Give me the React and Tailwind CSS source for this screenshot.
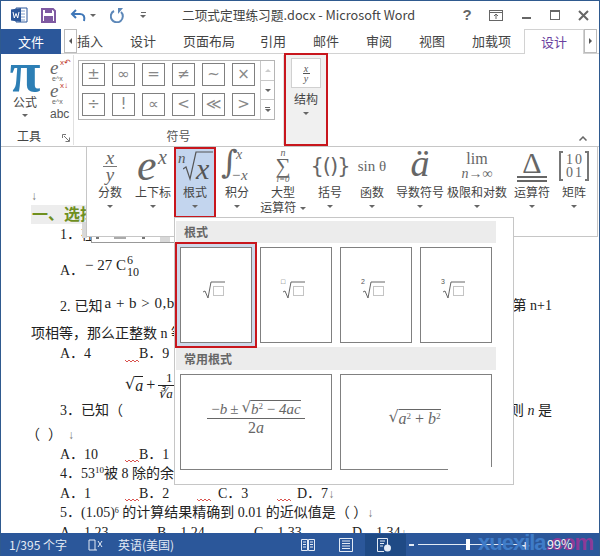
import React from 'react';

const uiFont = "font-['Noto_Sans_CJK_SC','Noto_Sans',sans-serif]";
const docFont = "font-['Liberation_Serif','Noto_Sans_CJK_SC',serif]";

const Caret = ({ className = '' }) => (
  <span className={`inline-block w-0 h-0 border-x-[3px] border-x-transparent border-t-[3px] border-t-[#666] ${className}`}></span>
);

const Squiggle = () => (
  <svg width="14" height="4" viewBox="0 0 14 4" className="self-end mb-[1px] shrink-0">
    <path d="M0 1 L2 3 L4 1 L6 3 L8 1 L10 3 L12 1 L14 3" fill="none" stroke="#d9534f" strokeWidth="1" />
  </svg>
);

const Radical = ({ children, className = '' }) => (
  <span className={`inline-flex items-start ${className}`}>
    <span className="font-['DejaVu_Sans',sans-serif] font-light leading-none">√</span>
    <span className="border-t border-current leading-[1.05] pt-[1px]">{children}</span>
  </span>
);

const RootIcon = ({ index }) => (
  <div className="relative pb-[10px] pr-[4px]">
    {index && (
      <span className="absolute left-[-1px] top-[-3px] text-[7px] leading-none text-[#555] font-['Liberation_Sans',sans-serif]">{index}</span>
    )}
    <svg width="24" height="18" viewBox="0 0 24 18">
      <path d="M1 11 L3 10 L6 17 L9 1 L23 1" fill="none" stroke="#666" strokeWidth="1" />
      <rect x="11.5" y="5.5" width="10" height="9" fill="none" stroke="#888" strokeWidth="1" strokeDasharray="1 1" />
    </svg>
  </div>
);

const EquationTool = ({ arrow, className = '' }) => (
  <div className={`relative h-[22px] w-[20px] leading-none text-[#666] ${className}`}>
    <span className="block font-['Liberation_Serif',serif] italic text-[19px] leading-[15px]">e</span>
    <span className="absolute left-[10px] top-[-1px] text-[8px] text-[#c0392b]">{arrow}</span>
    <div className="text-[7px] leading-[7px] ml-[2px]">e^x</div>
  </div>
);

const symbols = ['±', '∞', '=', '≠', '~', '×', '÷', '!', '∝', '<', '≪', '>'];
const tabs = [
  ['插入', 'w-[53px]'],
  ['设计', 'w-[53px]'],
  ['页面布局', 'w-[77px]'],
  ['引用', 'w-[53px]'],
  ['邮件', 'w-[53px]'],
  ['审阅', 'w-[53px]'],
  ['视图', 'w-[53px]'],
  ['加载项', 'w-[54px]'],
];

const structures = [
  {
    label: '分数', w: 'w-[44px]',
    icon: (
      <div className="flex flex-col items-center italic text-[19px] leading-[16px]">
        <span>x</span>
        <span className="w-[14px] border-t border-[#777]"></span>
        <span>y</span>
      </div>
    ),
  },
  {
    label: '上下标', w: 'w-[42px]',
    icon: (
      <div className="relative w-[32px] h-[36px] italic">
        <span className="absolute left-0 top-[-4px] text-[44px] leading-none">e</span>
        <span className="absolute left-[21px] top-[-1px] text-[20px] leading-none">x</span>
      </div>
    ),
  },
  {
    label: '根式', w: 'w-[42px]', active: true,
    icon: (
      <div className="relative w-[38px] h-[36px] italic text-[#555]">
        <span className="absolute left-[2px] top-[3px] text-[15px] leading-none">n</span>
        <svg width="30" height="30" viewBox="0 0 30 30" className="absolute left-[7px] top-[3px]">
          <path d="M0 18 L3 16 L7 28 L13 1 L30 1" fill="none" stroke="#555" strokeWidth="1.2" />
        </svg>
        <span className="absolute left-[20px] top-[6px] text-[30px] leading-none">x</span>
      </div>
    ),
  },
  {
    label: '积分', w: 'w-[42px]',
    icon: (
      <div className="relative w-[32px] h-[36px] text-[#666]">
        <span className="absolute left-0 top-[-2px] text-[32px] leading-none font-['DejaVu_Serif',serif]">∫</span>
        <span className="absolute left-[15px] top-[0px] italic text-[14px] leading-none">x</span>
        <span className="absolute left-[10px] top-[20px] italic text-[15px] leading-none">−x</span>
      </div>
    ),
  },
  {
    label: ['大型', '运算符'], w: 'w-[50px]',
    icon: <div className="flex flex-col items-center leading-none"><span className="italic text-[10px]">n</span><span className="text-[21px] leading-[17px]">∑</span><span className="italic text-[9px]">i=0</span></div>,
  },
  { label: '括号', w: 'w-[44px]', icon: <div className="text-[21px] font-['DejaVu_Sans',sans-serif] tracking-[-1px] leading-none">{'{()}'}</div> },
  { label: '函数', w: 'w-[40px]', icon: <div className="text-[15px] whitespace-nowrap">sin θ</div> },
  { label: '导数符号', w: 'w-[56px]', icon: <div className="italic text-[38px] leading-none mt-[-6px]">ä</div> },
  {
    label: '极限和对数', w: 'w-[58px]',
    icon: <div className="flex flex-col items-center leading-none"><span className="text-[16px]">lim</span><span className="italic text-[14px] whitespace-nowrap">n→∞</span></div>,
  },
  {
    label: '运算符', w: 'w-[52px]',
    icon: (
      <div className="flex flex-col items-center w-[30px]">
        <span className="text-[30px] leading-[26px]">Δ</span>
        <span className="w-full h-[2px] bg-[#666]"></span>
        <span className="w-full h-[2px] bg-[#666] mt-[2px]"></span>
      </div>
    ),
  },
  {
    label: '矩阵', w: 'w-[32px]',
    icon: (
      <div className="flex h-[30px] w-[30px] items-stretch">
        <span className="w-[4px] border-y-2 border-l-2 border-[#777]"></span>
        <span className="flex-1 text-[14px] leading-[13px] pt-[2px] text-center tracking-[2px] pl-[2px]">10<br />01</span>
        <span className="w-[4px] border-y-2 border-r-2 border-[#777]"></span>
      </div>
    ),
  },
];

const StructureItem = ({ item }) => (
  <div className={`relative ${item.w} h-full flex flex-col items-center shrink-0 ${item.active ? 'bg-[#c3d5ee]' : ''}`}>
    {item.active && <div className="absolute inset-0 border-2 border-[#c8161d]"></div>}
    <div className={`h-[36px] mt-[1px] flex items-center justify-center text-[#666] font-['Liberation_Serif',serif] ${item.w}`}>{item.icon}</div>
    {Array.isArray(item.label) ? (
      <div className="flex flex-col items-center text-[12px] leading-[15px] text-[#444]">
        <span>{item.label[0]}</span>
        <span className="whitespace-nowrap">{item.label[1]} <Caret className="align-middle ml-[1px]" /></span>
      </div>
    ) : (
      <>
        <div className="text-[12px] leading-[15px] text-[#444] whitespace-nowrap">{item.label}</div>
        <Caret className="mt-[6px]" />
      </>
    )}
  </div>
);

const TitleBar = () => (
  <div className="h-[28px] flex items-center shrink-0 relative bg-white">
    <svg width="17" height="16" viewBox="0 0 17 16" className="ml-[10px]">
      <path d="M5 1 H16 V15 H5 Z" fill="#fff" stroke="#2b579a" />
      <path d="M7 4 H14 M7 7 H14 M7 10 H14 M7 13 H14" stroke="#7d9ccb" />
      <path d="M0 2.5 L10 1 V15 L0 13.5 Z" fill="#2b579a" />
      <path d="M2 5 L3.3 11 L5 6.5 L6.7 11 L8 5" fill="none" stroke="#fff" strokeWidth="1" />
    </svg>
    <svg width="15" height="15" viewBox="0 0 15 15" className="ml-[13px]">
      <path d="M1 1 H12 L14 3 V14 H1 Z" fill="none" stroke="#7f5aa2" strokeWidth="2" />
      <rect x="4" y="1" width="7" height="4" fill="#7f5aa2" />
      <rect x="3" y="8" width="9" height="6" fill="#7f5aa2" />
    </svg>
    <svg width="16" height="13" viewBox="0 0 16 13" className="ml-[14px]">
      <path d="M6 1 L2 5 L6 9" fill="none" stroke="#3f77b8" strokeWidth="2" />
      <path d="M2 5 H10 C14 5 15 8 14 12" fill="none" stroke="#3f77b8" strokeWidth="2" />
    </svg>
    <Caret className="ml-[4px]" />
    <svg width="14" height="15" viewBox="0 0 14 15" className="ml-[14px]">
      <path d="M4 3 A6 6 0 1 0 11 4" fill="none" stroke="#5c87b8" strokeWidth="2" />
      <path d="M8 0 V6 L13 0 Z" fill="#5c87b8" />
    </svg>
    <div className="ml-[16px] flex flex-col items-center gap-[2px]">
      <span className="w-[5px] border-t border-[#666]"></span>
      <Caret />
    </div>
    <div className="absolute left-[181px] text-[12.7px] text-[#444] whitespace-nowrap">二项式定理练习题.docx - Microsoft Word</div>
    <div className="absolute right-[10px] top-0 h-full flex items-center text-[#666]">
      <span className="w-[14px] text-center font-bold text-[15px] font-['Liberation_Sans',sans-serif]">?</span>
      <svg width="14" height="11" viewBox="0 0 14 11" className="ml-[15px]">
        <rect x="0.5" y="0.5" width="13" height="10" fill="none" stroke="#666" />
        <path d="M0 2.5 H14 M7 9 V4 M5 6 L7 4 L9 6" fill="none" stroke="#666" />
      </svg>
      <span className="ml-[19px] w-[9px] h-[2px] bg-[#666] mt-[6px]"></span>
      <span className="ml-[19px] w-[10px] h-[10px] border border-[#666] border-t-2"></span>
      <svg width="11" height="11" viewBox="0 0 11 11" className="ml-[18px]">
        <path d="M1 1 L10 10 M10 1 L1 10" stroke="#666" strokeWidth="2" />
      </svg>
    </div>
  </div>
);

const TabBar = () => (
  <div className="h-[25px] flex items-stretch shrink-0 border-b border-[#d2d2d2] text-[13px] text-[#444]">
    <div className="w-[60px] -mb-[1px] bg-[#2b579a] text-white flex items-center justify-center">文件</div>
    <div className="ml-[3px] w-[13px] border border-[#bbb] flex items-center justify-center">
      <span className="w-0 h-0 border-y-[3px] border-y-transparent border-r-[3px] border-r-[#555]"></span>
    </div>
    <div className="flex items-center -ml-[2px]">
      {tabs.map(([name, w]) => (
        <div key={name + w} className={`${w} whitespace-nowrap pl-[2px]`}>{name}</div>
      ))}
    </div>
    <div className="w-[60px] -mb-[1px] bg-white border-x border-t border-[#d2d2d2] text-[#6b3fa0] flex items-center justify-center">设计</div>
    <div className="w-[13px] border border-[#bbb] flex items-center justify-center">
      <span className="w-0 h-0 border-y-[3px] border-y-transparent border-l-[3px] border-l-[#555]"></span>
    </div>
  </div>
);

const Ribbon = () => (
  <div className="h-[93px] flex shrink-0 border-b border-[#c6c6c6] relative bg-white text-[#444]">
    {/* 工具 */}
    <div className="w-[73px] border-r border-[#e1e1e1] my-[1px] flex flex-col relative">
      <div className="flex h-[71px]">
        <div className="w-[46px] flex flex-col items-center">
          <span className="font-['Liberation_Serif',serif] font-bold text-[56px] leading-[33px] mt-[1px] text-[#2d7fb5] ml-[2px]">π</span>
          <span className="text-[12px] leading-[15px] mt-[5px] ml-[2px] relative">公式</span>
          <Caret className="mt-[5px] ml-[2px]" />
        </div>
        <div className="flex flex-col w-[22px] mt-[5px] ml-[3px] font-['Liberation_Sans',sans-serif]">
          <EquationTool arrow="x↶" />
          <EquationTool arrow="x↓" className="mt-[1px]" />
          <span className="text-[12px] mt-[3px] leading-none text-[#555]">abc</span>
        </div>
      </div>
      <div className="mt-[2px] pl-[16px] text-[12px] leading-[16px]">工具</div>
      <svg width="8" height="8" viewBox="0 0 8 8" className="absolute right-[3px] bottom-[3px]">
        <path d="M0.5 4 V0.5 H4 M2 2 L7 7 M3.5 7.5 H7.5 V3.5" fill="none" stroke="#777" />
      </svg>
    </div>
    {/* 符号 */}
    <div className="w-[210px] flex flex-col items-center my-[1px] border-r border-[#e1e1e1]">
      <div className="mt-[5px] ml-[-4px] w-[197px] h-[60px] border border-[#b5b5b5] flex shrink-0">
        <div className="flex-1 grid grid-cols-[repeat(6,23px)] grid-rows-[repeat(2,23px)] gap-x-[7px] gap-y-[7px] pl-[3px] pt-[2px]">
          {symbols.map((s) => (
            <div key={s} className="border border-[#808080] flex items-center justify-center text-[15px] leading-none text-[#888] font-['DejaVu_Sans',sans-serif]">{s}</div>
          ))}
        </div>
        <div className="w-[14px] border-l border-[#c8c8c8] flex flex-col text-[#888]">
          <div className="flex-1 flex items-center justify-center"><span className="w-0 h-0 border-x-[3px] border-x-transparent border-b-[3px] border-b-[#ccc]"></span></div>
          <div className="flex-1 flex items-center justify-center border-y border-[#c8c8c8]"><Caret /></div>
          <div className="flex-1 flex flex-col items-center justify-center gap-[1px]"><span className="w-[5px] border-t border-[#666]"></span><Caret /></div>
        </div>
      </div>
      <div className="mt-[8px] text-[12px] leading-[16px] text-[#555]">符号</div>
    </div>
    {/* 结构 */}
    <div className="w-[44px] h-[93px] -mt-[1px] bg-[#f0f0f0] border-[2px] border-[#c8161d] flex flex-col items-center shrink-0">
      <div className="mt-[3px] w-[30px] h-[30px] bg-white border border-[#d0d0d0] flex flex-col items-center justify-center font-['Liberation_Serif',serif] italic text-[10px] leading-[9px] text-[#555]">
        <span>x</span>
        <span className="w-[7px] border-t border-[#555]"></span>
        <span>y</span>
      </div>
      <span className="mt-[3px] text-[12px] leading-[16px]">结构</span>
      <Caret className="mt-[5px]" />
    </div>
    <svg width="8" height="5" viewBox="0 0 8 5" className="absolute right-[12px] bottom-[5px]">
      <path d="M0.5 4.5 L4 1 L7.5 4.5" fill="none" stroke="#666" strokeWidth="1.5" />
    </svg>
  </div>
);

const Document = () => (
  <div className={`flex-1 min-h-0 overflow-hidden pt-[40px] text-[14px] leading-[20px] text-[#222] ${docFont}`}>
    <div className="h-[18px] pl-[30px] flex items-center text-[#777] text-[12px]">↓</div>
    <div className="h-[19px] ml-[30px] w-[120px] pl-[1px] bg-[#ededed] text-[#6f8f1f] text-[16px] font-bold flex items-center whitespace-nowrap">一、选择题</div>
    <div className="h-[22px] pl-[59px] flex items-center whitespace-nowrap">1．在</div>
    <div className="h-[48px] pl-[59px] flex items-center whitespace-nowrap">
      <span className="w-[25px] mt-[2px]">A．</span>
      <span className="text-[15px] mt-[-10px]">− 27 C</span>
      <span className="flex flex-col text-[12px] leading-[12px] ml-[1px] mt-[-8px]"><span>6</span><span>10</span></span>
    </div>
    <div className="h-[20px] mt-[2px] pl-[59px] pr-[47px] flex items-center justify-between whitespace-nowrap">
      <span>2.<span className="ml-[4px]">已知</span><span className="text-[15px] tracking-[0.5px] relative top-[-3px] ml-[2px]">a + b &gt; 0,b</span></span>
      <span>第 n+1</span>
    </div>
    <div className="h-[20px] mt-[8px] pl-[30px] flex items-center whitespace-nowrap">项相等，那么正整数 n 等</div>
    <div className="h-[20px] pl-[59px] flex items-center whitespace-nowrap">
      <span className="w-[65px]">A．4</span>
      <Squiggle />
      <span>B．9</span>
    </div>
    <div className="h-[32px] mt-[5px] pl-[124px] flex items-center whitespace-nowrap text-[16px]">
      <Radical className="italic">a</Radical>
      <span className="mx-[3px]">+</span>
      <span className="flex flex-col items-center leading-[15px] text-[13px]">
        <span>1</span>
        <span className="border-t border-[#222] w-[22px] italic">∛a</span>
      </span>
    </div>
    <div className="h-[20px] pl-[59px] pr-[47px] flex items-center justify-between whitespace-nowrap">
      <span>3．已知（</span>
      <span>则 <span className="italic">n</span> 是</span>
    </div>
    <div className="h-[20px] mt-[4px] pl-[25px] flex items-center whitespace-nowrap">
      <span>（</span>
      <span className="ml-[8px]">）</span>
      <span className="ml-[6px] text-[#777] text-[12px]">↓</span>
    </div>
    <div className="h-[19px] pl-[59px] flex items-center whitespace-nowrap">
      <span className="w-[65px]">A．10</span>
      <Squiggle />
      <span>B．1</span>
    </div>
    <div className="h-[20px] pl-[59px] flex items-center whitespace-nowrap">4．53<sup className="text-[9px]">10</sup> 被 8 除的余</div>
    <div className="h-[19px] pl-[59px] flex items-center whitespace-nowrap">
      <span className="w-[65px]">A．1</span>
      <Squiggle />
      <span className="w-[58px]">B．2</span>
      <Squiggle />
      <span className="w-[66px] pl-[7px]">C．3</span>
      <Squiggle />
      <span className="pl-[6px]">D．7<span className="text-[#777] text-[12px]">↓</span></span>
    </div>
    <div className="h-[20px] pl-[59px] flex items-center whitespace-nowrap">
      <span>5．(1.05)<sup className="text-[8px]">6</sup> 的计算结果精确到 0.01 的近似值是（ ）<span className="text-[#777] text-[12px]">↓</span></span>
    </div>
    <div className="h-[20px] pl-[59px] flex items-center whitespace-nowrap">
      <span className="w-[97px]">A．1.23</span>
      <span className="w-[97px]">B．1.24</span>
      <span className="w-[98px]">C．1.33</span>
      <span>D．1.34<span className="text-[#777] text-[12px]">↓</span></span>
    </div>
  </div>
);

const StatusBar = () => (
  <div className="h-[23px] shrink-0 bg-[#2b579a] text-[#e4ebf5] text-[12px] flex items-center relative">
    <span className="ml-[8px]">1/395 个字</span>
    <svg width="15" height="14" viewBox="0 0 15 14" className="ml-[21px]">
      <path d="M7 2 H1 V12 H7 V2 M7 12 H9" fill="none" stroke="#e4ebf5" />
      <path d="M10 3 L14 9 M14 3 L10 9" stroke="#e4ebf5" />
    </svg>
    <span className="ml-[15px]">英语(美国)</span>
    <svg width="14" height="14" viewBox="0 0 14 14" className="ml-[127px]">
      <path d="M0.5 1.5 H6.5 V12.5 H0.5 Z M7.5 1.5 H13.5 V12.5 H7.5 Z M2 4 H5 M2 6.5 H5 M2 9 H5 M9 4 H12 M9 6.5 H12 M9 9 H12" fill="none" stroke="#e4ebf5" />
    </svg>
    <svg width="14" height="14" viewBox="0 0 14 14" className="ml-[24px]">
      <path d="M0.5 0.5 H13.5 V13.5 H0.5 Z M3 3 H11 M3 5.5 H11 M3 8 H11 M3 10.5 H11" fill="none" stroke="#e4ebf5" />
    </svg>
    <div className="ml-[12px] w-[41px] h-[22px] bg-[#1f4a85] flex items-center pl-[12px]">
      <svg width="15" height="14" viewBox="0 0 15 14">
        <path d="M0.5 0.5 H10.5 V7 M0.5 0.5 V13.5 H7 M3 3 H8 M3 5.5 H7 M3 8 H6" fill="none" stroke="#e4ebf5" />
        <circle cx="10.5" cy="10" r="3.5" fill="#e4ebf5" />
      </svg>
    </div>
    <span className="ml-[3px] w-[5px] h-[2px] bg-[#e4ebf5]"></span>
    <div className="ml-[4px] w-[100px] h-[1px] bg-[#e4ebf5] relative">
      <span className="absolute left-[48px] top-[-5px] w-[4px] h-[11px] bg-white"></span>
    </div>
    <span className="ml-[3px] text-[14px] font-bold leading-none">+</span>
    {/* watermark */}
    <div className="absolute left-[477px] top-[-2px] font-['Liberation_Sans',sans-serif] font-bold text-[22px] leading-[23px] tracking-[-1px] whitespace-nowrap text-[#3f7cc8]">
      xuexila<span className="text-[#8c3a98]">.com</span>
    </div>
    <span className="absolute left-[546px] top-[3px] text-[12.5px] leading-[16px] text-[#f2f2f2]">99%</span>
  </div>
);

const StructurePanel = () => (
  <div className={`absolute left-[86px] top-[146px] w-[512px] h-[91px] bg-white border border-[#c6c6c6] pl-[1px] flex ${uiFont}`}>
    <div className="flex h-[71px]">
      {structures.map((item) => (
        <StructureItem key={item.w + String(item.label)} item={item} />
      ))}
    </div>
  </div>
);

const RootPanel = () => (
  <div className={`absolute left-[174px] top-[217px] w-[340px] h-[268px] bg-white border border-[#c6c6c6] pt-[3px] pl-[1px] ${uiFont}`}>
    <div className="w-[320px] h-[22px] bg-[#ececec] pl-[8px] text-[12px] font-bold text-[#666] flex items-center">根式</div>
    <div className="flex gap-[8px] pl-[4px] pt-[4px]">
      {[null, '□', '2', '3'].map((index, i) => (
        <div key={i} className={`relative w-[72px] h-[96px] border border-[#808080] bg-white flex items-center justify-center ${i === 0 ? 'shadow-[0_0_0_3px_#cfd9ea]' : ''}`}>
          <RootIcon index={index} />
          {i === 0 && <div className="absolute -inset-[6px] border-2 border-[#c8161d]"></div>}
        </div>
      ))}
    </div>
    <div className="w-[320px] h-[23px] mt-[4px] bg-[#ececec] pl-[8px] text-[12px] font-bold text-[#666] flex items-center">常用根式</div>
    <div className="flex gap-[8px] pl-[4px] pt-[4px] font-['Liberation_Serif',serif] text-[#666] text-[16px]">
      <div className="w-[152px] h-[96px] border border-[#808080] flex items-center justify-center pb-[8px]">
        <div className="flex flex-col items-center whitespace-nowrap leading-[18px]">
          <div className="flex items-start px-[1px] italic text-[15px]">
            <span className="not-italic">−</span>b<span className="not-italic mx-[3px]">±</span>
            <Radical>b<sup className="text-[9px] not-italic">2</sup> <span className="not-italic">−</span> 4ac</Radical>
          </div>
          <span className="w-[98px] border-t border-[#666]"></span>
          <span className="italic"><span className="not-italic">2</span>a</span>
        </div>
      </div>
      <div className="relative w-[152px] h-[96px] border border-[#808080] flex items-center justify-center pb-[8px] pr-[3px]">
        <Radical className="italic whitespace-nowrap">a<sup className="text-[9px] not-italic">2</sup> <span className="not-italic">+</span> b<sup className="text-[9px] not-italic">2</sup></Radical>
        <span className="absolute right-[-1px] bottom-[-1px] w-[44px] h-[3px] bg-white"></span>
      </div>
    </div>
  </div>
);

const ImageFrame = () => (
  <>
    <div className="absolute left-[82px] top-[222px] w-[5px] h-[16px] bg-[#d8d8d8]"></div>
    <div className="absolute left-[91px] top-[237px] w-[84px] h-[6px] border-x border-b border-[#999] bg-white flex justify-between items-start px-[4px]">
      <span className="w-[3px] h-[2px] bg-[#777]"></span>
      <span className="w-[12px] h-[2px] bg-[#aaa]"></span>
      <span className="w-[3px] h-[2px] bg-[#777]"></span>
      <span className="w-[10px] h-[5px] bg-[#d8d8d8]"></span>
    </div>
  </>
);

export default function App() {
  return (
    <div className={`relative w-[600px] h-[556px] overflow-hidden bg-white border-x border-t border-[#2f5a8f] flex flex-col ${uiFont}`}>
      <TitleBar />
      <TabBar />
      <Ribbon />
      <Document />
      <StatusBar />
      <div className="absolute left-[-1px] top-[-1px] w-[600px] h-[556px] pointer-events-none">
        <ImageFrame />
        <StructurePanel />
        <RootPanel />
      </div>
    </div>
  );
}
